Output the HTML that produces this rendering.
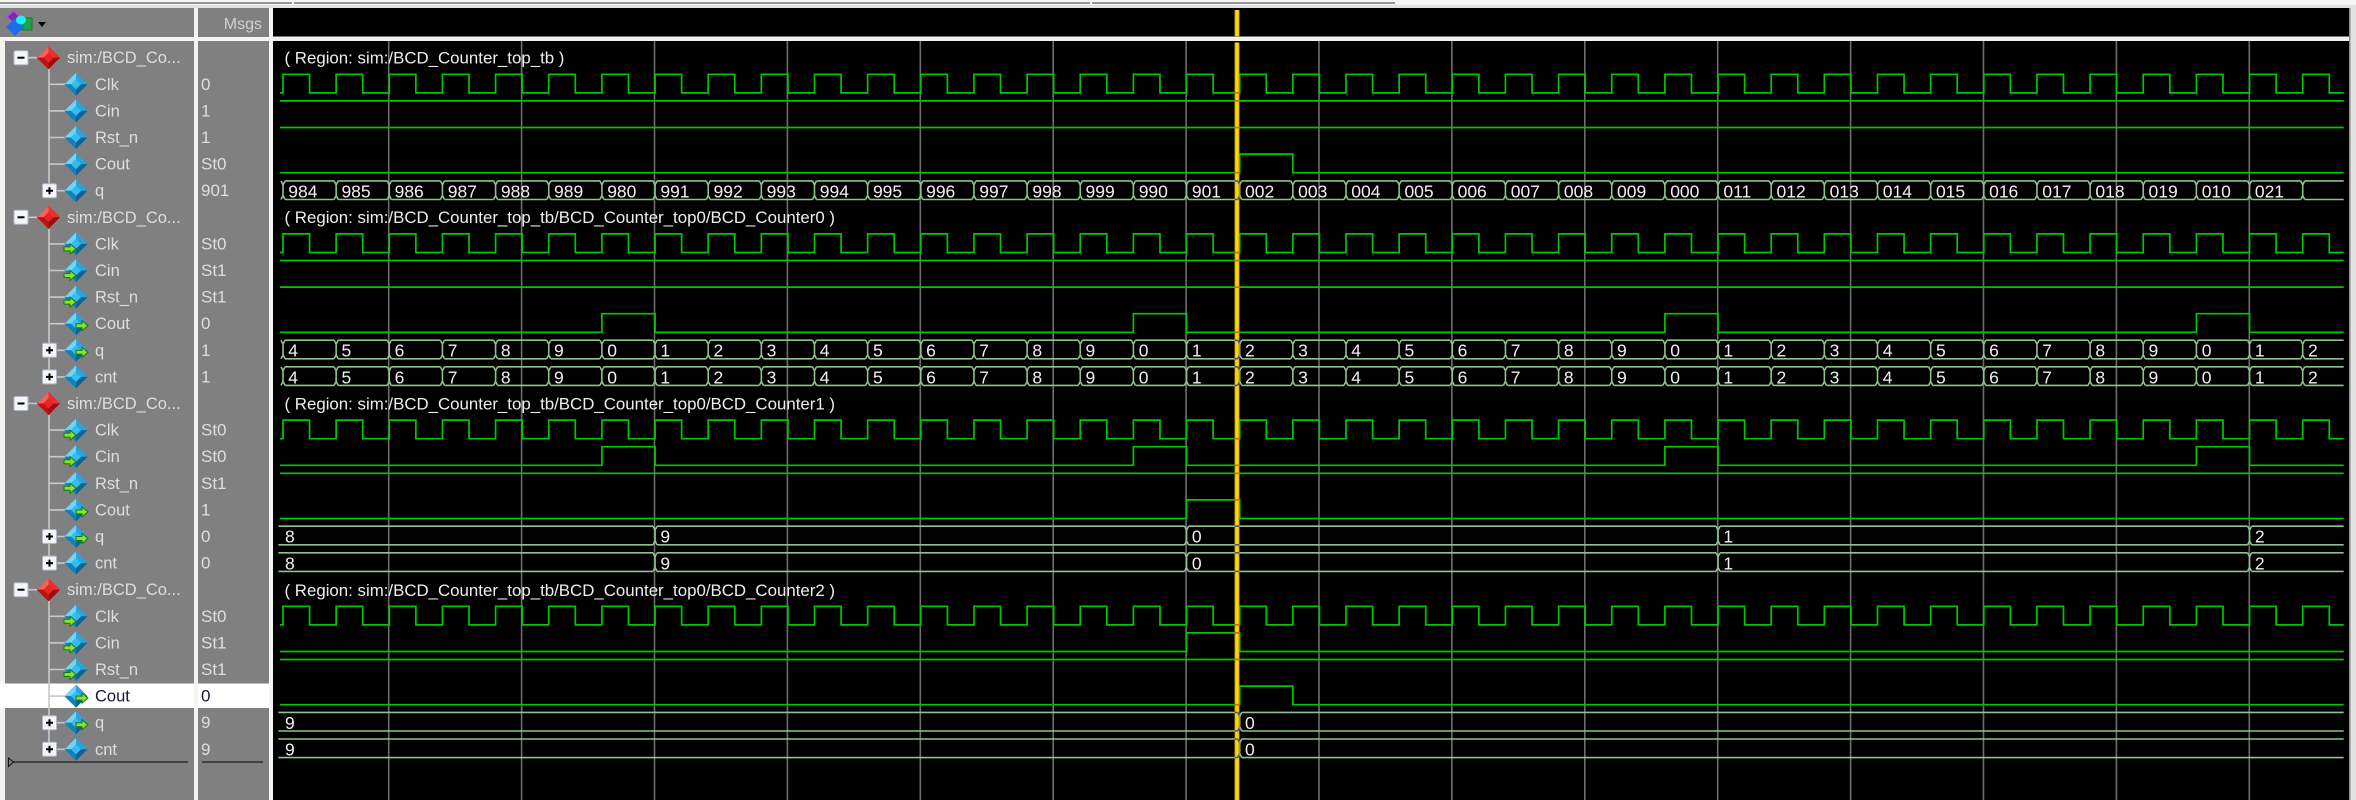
<!DOCTYPE html>
<html><head><meta charset="utf-8"><title>Wave</title>
<style>
html,body{margin:0;padding:0;background:#fff;width:2356px;height:800px;overflow:hidden}
svg{display:block;filter:blur(.35px)}
text{font-family:"Liberation Sans",sans-serif;white-space:pre}
.l{font-size:16.5px;fill:#dedede}
.v{font-size:17px;fill:#dedede}
.w{font-size:17.5px;fill:#f0f0f0}
.r{font-size:16.85px;fill:#eeeeee}
.sel{fill:#15153a}
</style></head><body>
<svg width="2356" height="800" viewBox="0 0 2356 800" xmlns="http://www.w3.org/2000/svg">
<defs>
<g id="d">
<polygon points="0,-11.5 11.5,0 0,11.5 -11.5,0" fill="#1b8fc8"/>
<polygon points="0,-11.5 -11.5,0 -5,0 0,-5" fill="#6fd6f8"/>
<polygon points="0,-11.5 11.5,0 5,0 0,-5" fill="#2aa5dc"/>
<polygon points="11.5,0 0,11.5 0,5 5,0" fill="#0d6496"/>
<polygon points="-11.5,0 0,11.5 0,5 -5,0" fill="#1580b8"/>
<polygon points="0,-5 5,0 0,5 -5,0" fill="#35bdf0"/>
</g>
<g id="rd">
<polygon points="0,-11.5 11.5,0 0,11.5 -11.5,0" fill="#c81818"/>
<polygon points="0,-11.5 -11.5,0 -5,0 0,-5" fill="#f86060"/>
<polygon points="0,-11.5 11.5,0 5,0 0,-5" fill="#e83030"/>
<polygon points="11.5,0 0,11.5 0,5 5,0" fill="#981010"/>
<polygon points="-11.5,0 0,11.5 0,5 -5,0" fill="#b81414"/>
<polygon points="0,-5 5,0 0,5 -5,0" fill="#e82424"/>
</g>
<path id="ar" d="M0 3H6V0L12 5 6 10V7H0Z" fill="#8fe028" stroke="#0f7a18" stroke-width="1"/>
<g id="mi"><rect x="-7" y="-7" width="14" height="14" rx="1.5" fill="#f4f6fa" stroke="#b0b8c8"/><path d="M-3.5 0H3.5" stroke="#000" stroke-width="2"/></g>
<g id="pl"><rect x="-7" y="-7" width="14" height="14" rx="1.5" fill="#f4f6fa" stroke="#b0b8c8"/><path d="M-3.5 0H3.5M0 -3.5V3.5" stroke="#000" stroke-width="2"/></g>
<path id="clk" fill="none" d="M280.3 18.6H283.3V0
h26.575v18.6h26.575v-18.6h26.575v18.6h26.575v-18.6h26.575v18.6h26.575v-18.6h26.575v18.6h26.575v-18.6h26.575v18.6h26.575v-18.6
h26.575v18.6h26.575v-18.6h26.575v18.6h26.575v-18.6h26.575v18.6h26.575v-18.6h26.575v18.6h26.575v-18.6h26.575v18.6h26.575v-18.6
h26.575v18.6h26.575v-18.6h26.575v18.6h26.575v-18.6h26.575v18.6h26.575v-18.6h26.575v18.6h26.575v-18.6h26.575v18.6h26.575v-18.6
h26.575v18.6h26.575v-18.6h26.575v18.6h26.575v-18.6h26.575v18.6h26.575v-18.6h26.575v18.6h26.575v-18.6h26.575v18.6h26.575v-18.6
h26.575v18.6h26.575v-18.6h26.575v18.6h26.575v-18.6h26.575v18.6h26.575v-18.6h26.575v18.6h26.575v-18.6h26.575v18.6h26.575v-18.6
h26.575v18.6h26.575v-18.6h26.575v18.6h26.575v-18.6h26.575v18.6h26.575v-18.6h26.575v18.6h26.575v-18.6h26.575v18.6h26.575v-18.6
h26.575v18.6h26.575v-18.6h26.575v18.6h26.575v-18.6h26.575v18.6h26.575v-18.6h26.575v18.6h26.575v-18.6h26.575v18.6h26.575v-18.6
h26.575v18.6h26.575v-18.6h26.575v18.6h26.575v-18.6h26.575v18.6h26.575v-18.6
h26.575v18.6H2344"/>
<g id="bus" fill="none">
<path d="M285.3 0H2344M285.3 18.6H2344" stroke-dasharray="49.15 4"/>
<path d="M281.3 0
l2 4v10.6l-2 4m4 0l-2-4m0-10.6l2-4m49.15 0l2 4v10.6l-2 4m4 0l-2-4m0-10.6l2-4m49.15 0l2 4v10.6l-2 4m4 0l-2-4m0-10.6l2-4m49.15 0l2 4v10.6l-2 4m4 0l-2-4m0-10.6l2-4m49.15 0l2 4v10.6l-2 4m4 0l-2-4m0-10.6l2-4m49.15 0
l2 4v10.6l-2 4m4 0l-2-4m0-10.6l2-4m49.15 0l2 4v10.6l-2 4m4 0l-2-4m0-10.6l2-4m49.15 0l2 4v10.6l-2 4m4 0l-2-4m0-10.6l2-4m49.15 0l2 4v10.6l-2 4m4 0l-2-4m0-10.6l2-4m49.15 0l2 4v10.6l-2 4m4 0l-2-4m0-10.6l2-4m49.15 0
l2 4v10.6l-2 4m4 0l-2-4m0-10.6l2-4m49.15 0l2 4v10.6l-2 4m4 0l-2-4m0-10.6l2-4m49.15 0l2 4v10.6l-2 4m4 0l-2-4m0-10.6l2-4m49.15 0l2 4v10.6l-2 4m4 0l-2-4m0-10.6l2-4m49.15 0l2 4v10.6l-2 4m4 0l-2-4m0-10.6l2-4m49.15 0
l2 4v10.6l-2 4m4 0l-2-4m0-10.6l2-4m49.15 0l2 4v10.6l-2 4m4 0l-2-4m0-10.6l2-4m49.15 0l2 4v10.6l-2 4m4 0l-2-4m0-10.6l2-4m49.15 0l2 4v10.6l-2 4m4 0l-2-4m0-10.6l2-4m49.15 0l2 4v10.6l-2 4m4 0l-2-4m0-10.6l2-4m49.15 0
l2 4v10.6l-2 4m4 0l-2-4m0-10.6l2-4m49.15 0l2 4v10.6l-2 4m4 0l-2-4m0-10.6l2-4m49.15 0l2 4v10.6l-2 4m4 0l-2-4m0-10.6l2-4m49.15 0l2 4v10.6l-2 4m4 0l-2-4m0-10.6l2-4m49.15 0l2 4v10.6l-2 4m4 0l-2-4m0-10.6l2-4m49.15 0
l2 4v10.6l-2 4m4 0l-2-4m0-10.6l2-4m49.15 0l2 4v10.6l-2 4m4 0l-2-4m0-10.6l2-4m49.15 0l2 4v10.6l-2 4m4 0l-2-4m0-10.6l2-4m49.15 0l2 4v10.6l-2 4m4 0l-2-4m0-10.6l2-4m49.15 0l2 4v10.6l-2 4m4 0l-2-4m0-10.6l2-4m49.15 0
l2 4v10.6l-2 4m4 0l-2-4m0-10.6l2-4m49.15 0l2 4v10.6l-2 4m4 0l-2-4m0-10.6l2-4m49.15 0l2 4v10.6l-2 4m4 0l-2-4m0-10.6l2-4m49.15 0l2 4v10.6l-2 4m4 0l-2-4m0-10.6l2-4m49.15 0l2 4v10.6l-2 4m4 0l-2-4m0-10.6l2-4m49.15 0
l2 4v10.6l-2 4m4 0l-2-4m0-10.6l2-4m49.15 0l2 4v10.6l-2 4m4 0l-2-4m0-10.6l2-4m49.15 0l2 4v10.6l-2 4m4 0l-2-4m0-10.6l2-4m49.15 0l2 4v10.6l-2 4m4 0l-2-4m0-10.6l2-4"/>
</g>
<path id="b3" fill="none" d="M278.7 0H653.35M657.35 0H1184.85M1188.85 0H1716.35M1720.35 0H2247.85M2251.85 0H2344M278.7 18.6H653.35M657.35 18.6H1184.85M1188.85 18.6H1716.35M1720.35 18.6H2247.85M2251.85 18.6H2344M653.35 0l2 4v10.6l-2 4m4 0l-2-4m0-10.6l2-4M1184.85 0l2 4v10.6l-2 4m4 0l-2-4m0-10.6l2-4M1716.35 0l2 4v10.6l-2 4m4 0l-2-4m0-10.6l2-4M2247.85 0l2 4v10.6l-2 4m4 0l-2-4m0-10.6l2-4"/>
<path id="b4" fill="none" d="M278.7 0H1238M1242 0H2344M278.7 18.6H1238M1242 18.6H2344M1238 0l2 4v10.6l-2 4m4 0l-2-4m0-10.6l2-4"/>
<clipPath id="cc"><rect x="1234.7" y="42" width="4.6" height="758"/></clipPath>
<g id="allw" fill="none">
<use href="#clk" y="74.3"/><use href="#clk" y="233.9"/><use href="#clk" y="420.1"/><use href="#clk" y="606.3"/>
<path d="M280.3 100.9H2344M280.3 127.5H2344M280.3 260.5H2344M280.3 287.1H2344M280.3 473.3H2344M280.3 659.5H2344"/>
<path d="M280.3 172.7H1240V154.1H1293.15V172.7H2344"/>
<path d="M280.3 332.3H602.2V313.7H655.35V332.3H1133.7V313.7H1186.85V332.3H1665.2V313.7H1718.35V332.3H2196.7V313.7H2249.85V332.3H2344"/>
<path d="M280.3 465.3H602.2V446.7H655.35V465.3H1133.7V446.7H1186.85V465.3H1665.2V446.7H1718.35V465.3H2196.7V446.7H2249.85V465.3H2344"/>
<path d="M280.3 518.5H1186.85V499.9H1240V518.5H2344"/>
<path d="M280.3 651.5H1186.85V632.9H1240V651.5H2344"/>
<path d="M280.3 704.7H1240V686.1H1293.15V704.7H2344"/>
</g>
<g id="allb">
<use href="#bus" y="180.9"/><use href="#bus" y="340.2"/><use href="#bus" y="366.8"/>
<use href="#b3" y="526.2"/><use href="#b3" y="552.8"/>
<use href="#b4" y="712.4"/><use href="#b4" y="739"/>
</g>
</defs>

<!-- top strip -->
<rect x="0" y="0" width="2356" height="800" fill="#f4f4f4"/>
<rect x="0" y="2" width="1395" height="2" fill="#979797"/>
<rect x="292" y="2" width="2" height="2" fill="#f0f0f0"/>
<rect x="1090" y="2" width="2" height="2" fill="#f0f0f0"/>
<rect x="0" y="5" width="2356" height="3" fill="#e2e2e2"/>

<!-- panels -->
<rect x="0" y="8" width="194" height="29" fill="#808080"/>
<rect x="198" y="8" width="71" height="29" fill="#808080"/>
<rect x="5" y="41" width="189" height="759" fill="#808080"/>
<rect x="198" y="41" width="71" height="759" fill="#808080"/>
<rect x="273" y="8" width="2076" height="792" fill="#000"/>
<rect x="273" y="36" width="2076" height="1" fill="#777"/>
<rect x="273" y="37" width="2076" height="4" fill="#f0f0f0"/>
<rect x="2349" y="8" width="1.5" height="792" fill="#8a8a8a"/>
<rect x="2350.5" y="8" width="5.5" height="792" fill="#e2e2e2"/>
<!-- selected row -->
<rect x="0" y="683.5" width="194" height="24.5" fill="#fff"/>
<rect x="198" y="683.5" width="71" height="24.5" fill="#fff"/>

<!-- header icon -->
<polygon points="13.5,11 20,17 13.5,23 7,17" fill="#7a2aa8" stroke="#c040e8" stroke-width="1.5"/>
<rect x="22" y="18" width="10" height="12" fill="#1fa04a" stroke="#127a30"/>
<polygon points="15,18 24,27 15,36 6,27" fill="#1c6ee8"/>
<ellipse cx="21" cy="20" rx="5" ry="4.5" fill="#1ff0f8"/>
<polygon points="38,22 46,22 42,27" fill="#000"/>
<text x="262" y="29" text-anchor="end" font-size="16" fill="#d0d0d0">Msgs</text>

<!-- tree lines -->
<g stroke="#c8c8c8" stroke-width="1.6" fill="none">
<path d="M28 57.7H37M49 69V184M49 84.3H65M49 110.9H65M49 137.5H65M49 164.1H65M57 190.7H65"/>
<path d="M28 217.3H37M49 229V370M49 243.9H65M49 270.5H65M49 297.1H65M49 323.7H65M57 350.3H65M57 376.9H65"/>
<path d="M28 403.5H37M49 415V556M49 430.1H65M49 456.7H65M49 483.3H65M49 509.9H65M57 536.5H65M57 563.1H65"/>
<path d="M28 589.7H37M49 601V742M49 616.3H65M49 642.9H65M49 669.5H65M49 696.1H65M57 722.7H65M57 749.3H65"/>
</g>

<!-- icons -->
<use href="#mi" x="21" y="57.7"/><use href="#rd" x="48.5" y="57.7"/>
<use href="#d" x="76" y="84.3"/><use href="#d" x="76" y="110.9"/><use href="#d" x="76" y="137.5"/><use href="#d" x="76" y="164.1"/>
<use href="#pl" x="49.5" y="190.7"/><use href="#d" x="76" y="190.7"/>

<use href="#mi" x="21" y="217.3"/><use href="#rd" x="48.5" y="217.3"/>
<use href="#d" x="76" y="243.9"/><use href="#ar" x="64" y="243.9"/>
<use href="#d" x="76" y="270.5"/><use href="#ar" x="64" y="270.5"/>
<use href="#d" x="76" y="297.1"/><use href="#ar" x="64" y="297.1"/>
<use href="#d" x="76" y="323.7"/><use href="#ar" x="76" y="320.7"/>
<use href="#pl" x="49.5" y="350.3"/><use href="#d" x="76" y="350.3"/><use href="#ar" x="76" y="347.3"/>
<use href="#pl" x="49.5" y="376.9"/><use href="#d" x="76" y="376.9"/>

<use href="#mi" x="21" y="403.5"/><use href="#rd" x="48.5" y="403.5"/>
<use href="#d" x="76" y="430.1"/><use href="#ar" x="64" y="430.1"/>
<use href="#d" x="76" y="456.7"/><use href="#ar" x="64" y="456.7"/>
<use href="#d" x="76" y="483.3"/><use href="#ar" x="64" y="483.3"/>
<use href="#d" x="76" y="509.9"/><use href="#ar" x="76" y="506.9"/>
<use href="#pl" x="49.5" y="536.5"/><use href="#d" x="76" y="536.5"/><use href="#ar" x="76" y="533.5"/>
<use href="#pl" x="49.5" y="563.1"/><use href="#d" x="76" y="563.1"/>

<use href="#mi" x="21" y="589.7"/><use href="#rd" x="48.5" y="589.7"/>
<use href="#d" x="76" y="616.3"/><use href="#ar" x="64" y="616.3"/>
<use href="#d" x="76" y="642.9"/><use href="#ar" x="64" y="642.9"/>
<use href="#d" x="76" y="669.5"/><use href="#ar" x="64" y="669.5"/>
<use href="#d" x="76" y="696.1"/><use href="#ar" x="76" y="693.1"/>
<use href="#pl" x="49.5" y="722.7"/><use href="#d" x="76" y="722.7"/><use href="#ar" x="76" y="719.7"/>
<use href="#pl" x="49.5" y="749.3"/><use href="#d" x="76" y="749.3"/>

<!-- left labels -->
<g class="l">
<text class="l" x="67" y="63.2">sim:/BCD_Co...</text>
<text class="l" x="95" y="89.8">Clk</text><text class="l" x="95" y="116.4">Cin</text><text class="l" x="95" y="143">Rst_n</text><text class="l" x="95" y="169.6">Cout</text><text class="l" x="95" y="196.2">q</text>
<text class="l" x="67" y="222.8">sim:/BCD_Co...</text>
<text class="l" x="95" y="249.4">Clk</text><text class="l" x="95" y="276">Cin</text><text class="l" x="95" y="302.6">Rst_n</text><text class="l" x="95" y="329.2">Cout</text><text class="l" x="95" y="355.8">q</text><text class="l" x="95" y="382.4">cnt</text>
<text class="l" x="67" y="409">sim:/BCD_Co...</text>
<text class="l" x="95" y="435.6">Clk</text><text class="l" x="95" y="462.2">Cin</text><text class="l" x="95" y="488.8">Rst_n</text><text class="l" x="95" y="515.4">Cout</text><text class="l" x="95" y="542">q</text><text class="l" x="95" y="568.6">cnt</text>
<text class="l" x="67" y="595.2">sim:/BCD_Co...</text>
<text class="l" x="95" y="621.8">Clk</text><text class="l" x="95" y="648.4">Cin</text><text class="l" x="95" y="675">Rst_n</text><text class="l sel" x="95" y="701.6">Cout</text><text class="l" x="95" y="728.2">q</text><text class="l" x="95" y="754.8">cnt</text>
</g>

<!-- values -->
<g>
<text class="v" x="201" y="89.8">0</text><text class="v" x="201" y="116.4">1</text><text class="v" x="201" y="143">1</text><text class="v" x="201" y="169.6">St0</text><text class="v" x="201" y="196.2">901</text>
<text class="v" x="201" y="249.4">St0</text><text class="v" x="201" y="276">St1</text><text class="v" x="201" y="302.6">St1</text><text class="v" x="201" y="329.2">0</text><text class="v" x="201" y="355.8">1</text><text class="v" x="201" y="382.4">1</text>
<text class="v" x="201" y="435.6">St0</text><text class="v" x="201" y="462.2">St0</text><text class="v" x="201" y="488.8">St1</text><text class="v" x="201" y="515.4">1</text><text class="v" x="201" y="542">0</text><text class="v" x="201" y="568.6">0</text>
<text class="v" x="201" y="621.8">St0</text><text class="v" x="201" y="648.4">St1</text><text class="v" x="201" y="675">St1</text><text class="v sel" x="201" y="701.6">0</text><text class="v" x="201" y="728.2">9</text><text class="v" x="201" y="754.8">9</text>
</g>

<!-- bottom lines -->
<path d="M10 762H188M202 762H263" stroke="#2c2c2c" stroke-width="1.6" fill="none"/>
<polygon points="8.5,758 13.5,762 8.5,766.5" fill="#808080" stroke="#111" stroke-width="1"/>

<!-- grid -->
<g stroke="#6e6e6e" stroke-width="1.6">
<path d="M388.7 41V800M521.6 41V800M654.5 41V800M787.4 41V800M920.3 41V800M1053.2 41V800M1186.1 41V800M1319 41V800M1451.9 41V800M1584.8 41V800M1717.7 41V800M1850.6 41V800M1983.5 41V800M2116.4 41V800M2249.3 41V800"/>
</g>

<!-- waves -->
<g transform="translate(-.3 0)">
<g stroke="#00c800" stroke-width="1.7"><use href="#allw"/></g>
<g stroke="#90c290" stroke-width="1.6"><use href="#allb"/></g>
</g>

<!-- region labels -->
<text class="r" x="284.5" y="63.5">( Region: sim:/BCD_Counter_top_tb )</text>
<text class="r" x="284.5" y="223">( Region: sim:/BCD_Counter_top_tb/BCD_Counter_top0/BCD_Counter0 )</text>
<text class="r" x="284.5" y="409.5">( Region: sim:/BCD_Counter_top_tb/BCD_Counter_top0/BCD_Counter1 )</text>
<text class="r" x="284.5" y="596">( Region: sim:/BCD_Counter_top_tb/BCD_Counter_top0/BCD_Counter2 )</text>

<!-- bus values -->
<text class="w" y="197.4"><tspan x="288.3">984</tspan><tspan x="341.45">985</tspan><tspan x="394.6">986</tspan><tspan x="447.75">987</tspan><tspan x="500.9">988</tspan><tspan x="554.05">989</tspan><tspan x="607.2">980</tspan><tspan x="660.35">991</tspan><tspan x="713.5">992</tspan><tspan x="766.65">993</tspan><tspan x="819.8">994</tspan><tspan x="872.95">995</tspan><tspan x="926.1">996</tspan><tspan x="979.25">997</tspan><tspan x="1032.4">998</tspan><tspan x="1085.55">999</tspan><tspan x="1138.7">990</tspan><tspan x="1191.85">901</tspan><tspan x="1245">002</tspan><tspan x="1298.15">003</tspan><tspan x="1351.3">004</tspan><tspan x="1404.45">005</tspan><tspan x="1457.6">006</tspan><tspan x="1510.75">007</tspan><tspan x="1563.9">008</tspan><tspan x="1617.05">009</tspan><tspan x="1670.2">000</tspan><tspan x="1723.35">011</tspan><tspan x="1776.5">012</tspan><tspan x="1829.65">013</tspan><tspan x="1882.8">014</tspan><tspan x="1935.95">015</tspan><tspan x="1989.1">016</tspan><tspan x="2042.25">017</tspan><tspan x="2095.4">018</tspan><tspan x="2148.55">019</tspan><tspan x="2201.7">010</tspan><tspan x="2254.85">021</tspan></text>
<text class="w" y="356.7" x="288.3 341.45 394.6 447.75 500.9 554.05 607.2 660.35 713.5 766.65 819.8 872.95 926.1 979.25 1032.4 1085.55 1138.7 1191.85 1245 1298.15 1351.3 1404.45 1457.6 1510.75 1563.9 1617.05 1670.2 1723.35 1776.5 1829.65 1882.8 1935.95 1989.1 2042.25 2095.4 2148.55 2201.7 2254.85 2308">456789012345678901234567890123456789012</text>
<text class="w" y="383.3" x="288.3 341.45 394.6 447.75 500.9 554.05 607.2 660.35 713.5 766.65 819.8 872.95 926.1 979.25 1032.4 1085.55 1138.7 1191.85 1245 1298.15 1351.3 1404.45 1457.6 1510.75 1563.9 1617.05 1670.2 1723.35 1776.5 1829.65 1882.8 1935.95 1989.1 2042.25 2095.4 2148.55 2201.7 2254.85 2308">456789012345678901234567890123456789012</text>
<text class="w" y="542.7" x="285 660.35 1191.85 1723.35 2254.85">89012</text>
<text class="w" y="569.3" x="285 660.35 1191.85 1723.35 2254.85">89012</text>
<text class="w" y="728.9" x="285 1245">90</text>
<text class="w" y="755.5" x="285 1245">90</text>

<!-- cursor -->
<rect x="1234.7" y="10" width="4.6" height="26.5" fill="#ffd800"/>
<rect x="1234.7" y="42.5" width="4.6" height="757.5" fill="#ffd800"/>
<path d="M1235 10V36.5M1239 10V36.5M1235 42.5V800M1239 42.5V800" stroke="#b89a10" stroke-width=".7"/>
<g clip-path="url(#cc)">
<g transform="translate(-.3 0)">
<g stroke="#e85a10" stroke-width="1.7"><use href="#allw"/></g>
<g stroke="#5a4a9c" stroke-width="1.6"><use href="#allb"/></g>
</g>
</g>
</svg>
</body></html>
